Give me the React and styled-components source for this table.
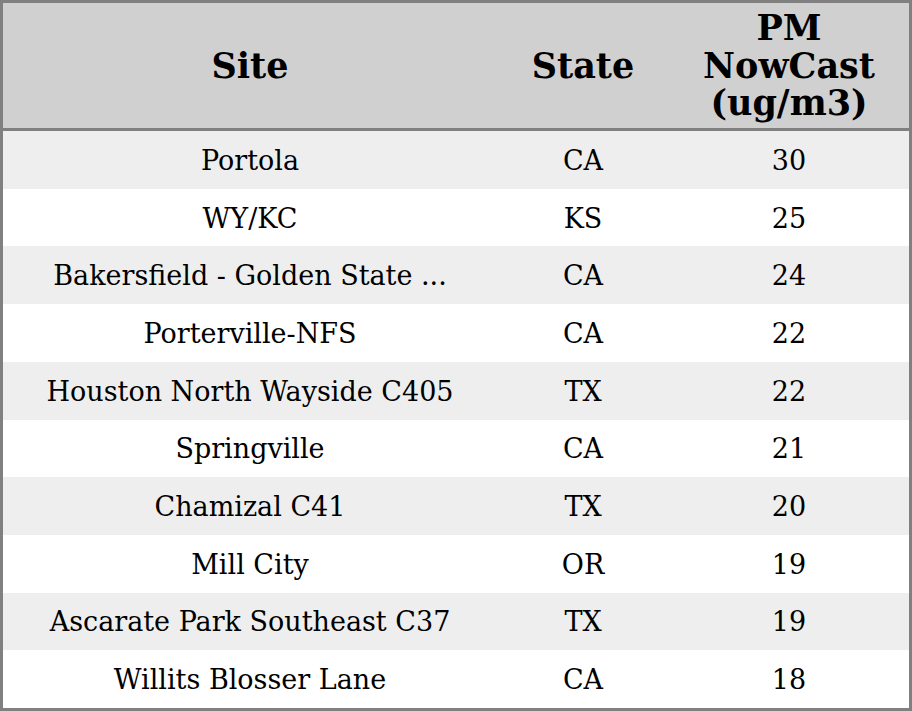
import React from "react";
import styled, { createGlobalStyle } from "styled-components";

const GlobalStyle = createGlobalStyle`
  html, body {
    margin: 0;
    padding: 0;
    background: #ffffff;
  }
  * {
    box-sizing: border-box;
  }
`;

const Table = styled.div`
  width: 912px;
  height: 711px;
  border: 3px solid #808080;
  display: grid;
  grid-template-rows: 128px repeat(10, 1fr);
  font-family: "DejaVu Serif", "Liberation Serif", serif;
  color: #000;
`;

const HeaderRow = styled.div`
  display: grid;
  grid-template-columns: 494px 172px 1fr;
  background-color: #d0d0d0;
  border-bottom: 3px solid #808080;
`;

const HeadCell = styled.div`
  display: flex;
  align-items: center;
  justify-content: center;
  text-align: center;
  font-size: 35px;
  font-weight: bold;
  line-height: 37.5px;
`;

const Row = styled.div`
  display: grid;
  grid-template-columns: 494px 172px 1fr;
  background-color: ${(p) => (p.$striped ? "#eeeeee" : "#ffffff")};
`;

const Cell = styled.div`
  display: flex;
  align-items: center;
  justify-content: center;
  font-size: 27px;
  white-space: nowrap;
  overflow: hidden;
  padding-top: 1px;
`;

const rows = [
  ["Portola", "CA", 30],
  ["WY/KC", "KS", 25],
  ["Bakersfield - Golden State ...", "CA", 24],
  ["Porterville-NFS", "CA", 22],
  ["Houston North Wayside C405", "TX", 22],
  ["Springville", "CA", 21],
  ["Chamizal C41", "TX", 20],
  ["Mill City", "OR", 19],
  ["Ascarate Park Southeast C37", "TX", 19],
  ["Willits Blosser Lane", "CA", 18],
];

export default function App() {
  return (
    <>
      <GlobalStyle />
      <Table>
        <HeaderRow>
          <HeadCell>Site</HeadCell>
          <HeadCell>State</HeadCell>
          <HeadCell>
            PM
            <br />
            NowCast
            <br />
            (ug/m3)
          </HeadCell>
        </HeaderRow>
        {rows.map(([site, state, value], i) => (
          <Row key={site} $striped={i % 2 === 0}>
            <Cell>{site}</Cell>
            <Cell>{state}</Cell>
            <Cell>{value}</Cell>
          </Row>
        ))}
      </Table>
    </>
  );
}
